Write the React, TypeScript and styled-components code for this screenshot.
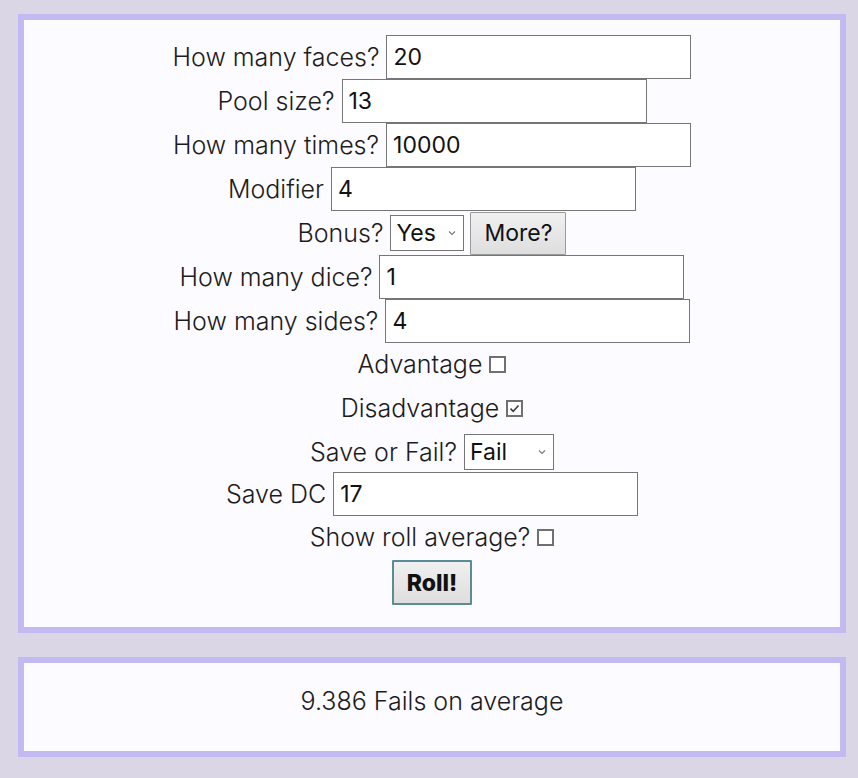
import React, { useState } from "react";
import styled, { createGlobalStyle } from "styled-components";

const GlobalStyle = createGlobalStyle`
  body {
    margin: 0;
    background: #dad6e6;
    font-family: "Inter", "Liberation Sans", sans-serif;
    color: #1c1c1c;
  }
`;

const Page = styled.div`
  padding: 14px 12px 21px 18px;
`;

const Panel = styled.div`
  border: 6px solid #c4baf2;
  background: #fcfbff;
`;

const FormPanel = styled(Panel)`
  padding: 15px 0 22px;
  display: flex;
  flex-direction: column;
`;

const ResultPanel = styled(Panel)`
  margin-top: 24px;
  padding: 18px 0 30px;
  text-align: center;
  font-size: 25px;
  font-weight: 300;
  line-height: 40px;
`;

const Row = styled.div<{ $h?: number }>`
  display: flex;
  justify-content: center;
  align-items: center;
  gap: 7px;
  height: ${(p) => p.$h ?? 44}px;
`;

const Label = styled.span`
  font-size: 25px;
  font-weight: 300;
  white-space: nowrap;
`;

const TextInput = styled.input`
  box-sizing: border-box;
  width: 305px;
  height: 44px;
  margin: 0;
  padding: 0 6px;
  border: 1px solid #767676;
  border-radius: 0;
  background: #fff;
  font-family: "Inter", "Liberation Sans", sans-serif;
  font-size: 23px;
  color: #111;
  outline: none;
`;

const SelectBox = styled.div<{ $w: number }>`
  position: relative;
  width: ${(p) => p.$w}px;
  height: 36px;
  box-sizing: border-box;
`;

const Select = styled.select`
  appearance: none;
  box-sizing: border-box;
  width: 100%;
  height: 100%;
  margin: 0;
  padding: 0 0 0 5px;
  border: 1px solid #767676;
  border-radius: 0;
  background: #fff;
  font-family: "Inter", "Liberation Sans", sans-serif;
  font-size: 23px;
  color: #111;
  outline: none;
`;

const Chevron = styled.svg`
  position: absolute;
  right: 8px;
  top: 15px;
  width: 8px;
  height: 6px;
  pointer-events: none;
`;

const Button = styled.button<{ $strong?: boolean }>`
  box-sizing: border-box;
  margin: 0;
  font-family: "Inter", "Liberation Sans", sans-serif;
  color: #111;
  background: linear-gradient(#f0f0f0, #dedede);
  border-radius: 1px;
  cursor: pointer;
  ${(p) =>
    p.$strong
      ? `
    width: 80px;
    height: 45px;
    border: 2px solid #5b8b95;
    font-size: 23px;
    font-weight: 800;
  `
      : `
    width: 96px;
    height: 43px;
    border: 1px solid #9a9a9a;
    font-size: 23px;
    font-weight: 400;
  `}
`;

const Box = styled.span`
  display: inline-flex;
  align-items: center;
  justify-content: center;
  box-sizing: border-box;
  flex: 0 0 17px;
  width: 17px;
  height: 17px;
  margin-top: 7px;
  border: 2px solid #707070;
  background: #fff;
  cursor: pointer;
`;

const CheckRow = styled(Row)`
  align-items: flex-start;
  padding-top: 6px;
  box-sizing: border-box;
`;

const Dropdown = ({ w, value, options }: { w: number; value: string; options: string[] }) => (
  <SelectBox $w={w}>
    <Select defaultValue={value}>
      {options.map((o) => (
        <option key={o}>{o}</option>
      ))}
    </Select>
    <Chevron viewBox="0 0 8 6">
      <path d="M1 1.5 L4 4.5 L7 1.5" fill="none" stroke="#777" strokeWidth="1.1" />
    </Chevron>
  </SelectBox>
);

const Checkbox = ({ label, initial }: { label: string; initial: boolean }) => {
  const [on, setOn] = useState(initial);
  return (
    <CheckRow>
      <Label>{label}</Label>
      <Box role="checkbox" aria-checked={on} onClick={() => setOn(!on)}>
        {on && (
          <svg width="11" height="11" viewBox="0 0 11 11">
            <path d="M1.5 5.6 L4.2 8.3 L9.5 2.4" fill="none" stroke="#3a3a3a" strokeWidth="1.5" />
          </svg>
        )}
      </Box>
    </CheckRow>
  );
};

const fields = [
  ["How many faces?", "20"],
  ["Pool size?", "13"],
  ["How many times?", "10000"],
  ["Modifier", "4"],
];

export default function App() {
  return (
    <>
      <GlobalStyle />
      <Page>
        <FormPanel>
          {fields.map(([label, value]) => (
            <Row key={label}>
              <Label>{label}</Label>
              <TextInput defaultValue={value} />
            </Row>
          ))}
          <Row>
            <Label>Bonus?</Label>
            <Dropdown w={74} value="Yes" options={["Yes", "No"]} />
            <Button style={{ marginLeft: -1 }}>More?</Button>
          </Row>
          <Row>
            <Label>How many dice?</Label>
            <TextInput defaultValue="1" />
          </Row>
          <Row>
            <Label>How many sides?</Label>
            <TextInput defaultValue="4" />
          </Row>
          <Checkbox label="Advantage" initial={false} />
          <Checkbox label="Disadvantage" initial={true} />
          <Row $h={41}>
            <Label>Save or Fail?</Label>
            <Dropdown w={90} value="Fail" options={["Save", "Fail"]} />
          </Row>
          <Row>
            <Label>Save DC</Label>
            <TextInput defaultValue="17" />
          </Row>
          <Checkbox label="Show roll average?" initial={false} />
          <Row $h={45}>
            <Button $strong>Roll!</Button>
          </Row>
        </FormPanel>
        <ResultPanel>9.386 Fails on average</ResultPanel>
      </Page>
    </>
  );
}
